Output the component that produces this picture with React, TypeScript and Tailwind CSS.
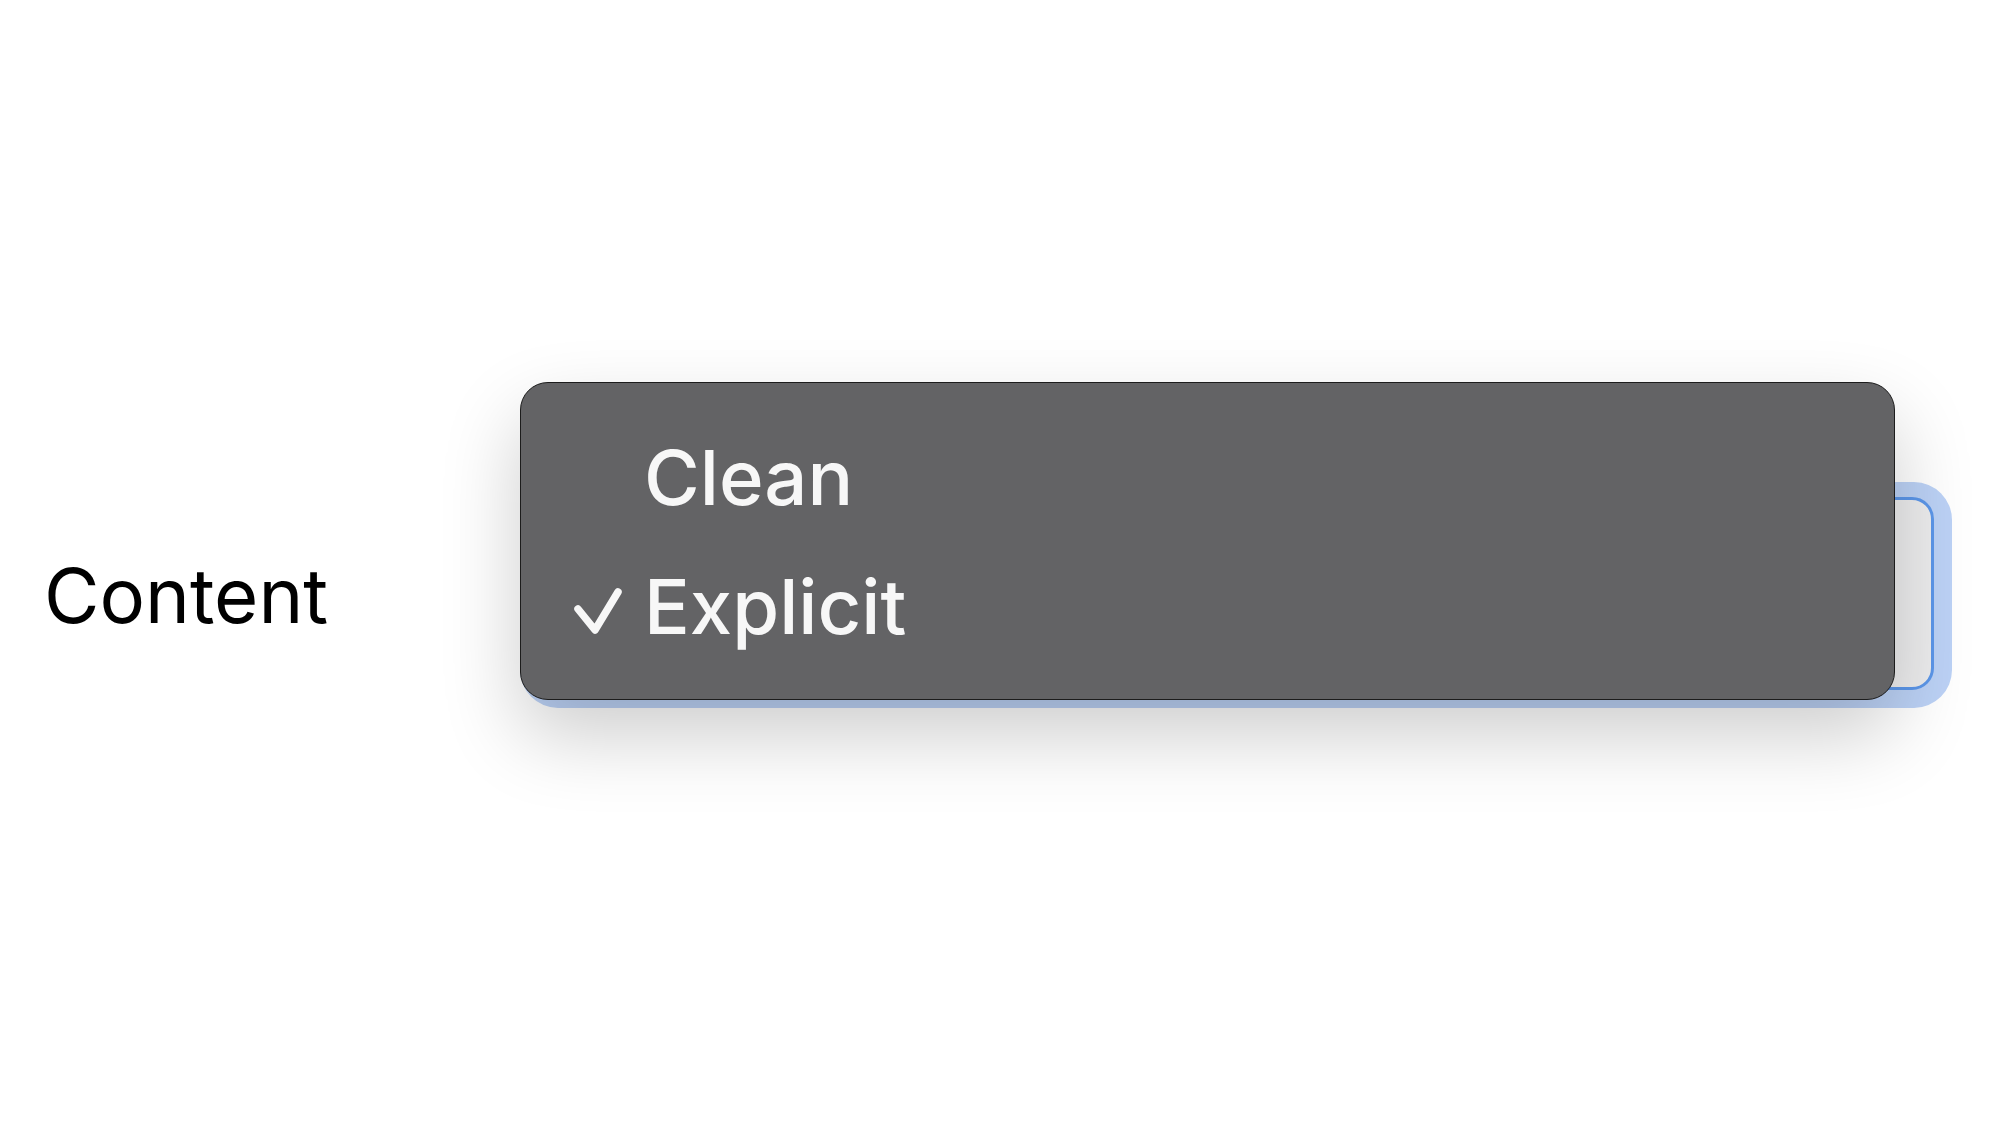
import React from "react";

export default function App() {
  return (
    <div className="w-[2000px] h-[1125px] bg-white overflow-hidden" style={{ fontFamily: "Inter, 'Liberation Sans', sans-serif" }}>
      <div className="pt-[482px] flex items-center h-[708px]">
        <div className="w-[520px] pl-[44px] text-[76px] leading-none text-black">Content</div>
        <div className="relative w-[1432px] h-[226px]">
          {/* select with focus ring */}
          <div className="absolute inset-0 rounded-[38px] bg-[#bcd2f6]" />
          <div className="absolute left-[16px] top-[15px] w-[1398px] h-[193px] rounded-[22px] border-[3px] border-[#5c97ea] bg-[#ededee]" />
          {/* popup menu */}
          <div className="absolute left-0 top-[-100px] w-[1375px] h-[318px] rounded-[28px] bg-[#636365] border-[1.5px] border-[#1c1c1c] shadow-[0_35px_80px_rgba(0,0,0,0.2)] flex flex-col pt-[30px]">
            <div className="h-[128px] flex items-center">
              <div className="w-[123px] shrink-0" />
              <span className="text-[76px] leading-none font-medium text-[#f7f7f7]">Clean</span>
            </div>
            <div className="h-[130px] flex items-center">
              <div className="w-[123px] shrink-0 pl-[52px] flex items-center pt-[10px]">
                <svg width="50" height="48" viewBox="0 0 50 48" fill="none">
                  <path d="M5 22 L22 43 L45 5" stroke="#f7f7f7" strokeWidth="7.5" strokeLinecap="round" strokeLinejoin="round" />
                </svg>
              </div>
              <span className="text-[76px] leading-none font-medium text-[#f7f7f7]">Explicit</span>
            </div>
          </div>
        </div>
      </div>
    </div>
  );
}
